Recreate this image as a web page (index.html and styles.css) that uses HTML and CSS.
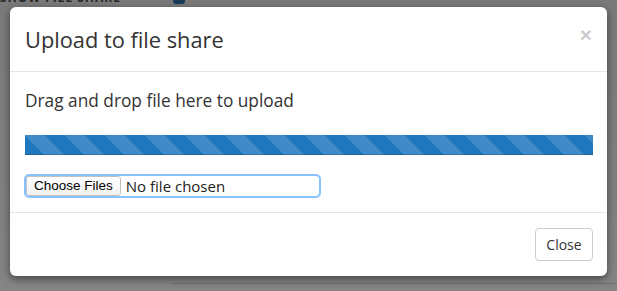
FILE: index.html
```html
<!DOCTYPE html>
<html lang="en">
<head>
  <meta charset="UTF-8">
  <title>Upload to file share</title>
  <link rel="stylesheet" href="styles.css">
</head>
<body>
  <div class="page">
    <div class="page-top">
      <span class="page-title">SHOW FILE SHARE</span>
      <span class="badge"></span>
    </div>
  </div>
  <div class="backdrop">
    <div class="modal">
      <div class="modal-header">
        <h4 class="modal-title">Upload to file share</h4>
        <a href="javascript:;" class="close">&times;</a>
      </div>
      <div class="modal-body">
        <p class="hint">Drag and drop file here to upload</p>
        <div class="progress">
          <div class="progress-bar"></div>
        </div>
        <label class="file-field">
          <span class="file-btn">Choose Files</span>
          <span class="file-name">No file chosen</span>
        </label>
      </div>
      <div class="modal-footer">
        <a href="javascript:;" class="btn">Close</a>
      </div>
    </div>
  </div>
</body>
</html>
```
FILE: styles.css
```css
body {
  margin: 0;
  width: 617px;
  height: 291px;
  overflow: hidden;
  position: relative;
  background: #fff;
  font-family: "Open Sans", "Liberation Sans", sans-serif;
  color: #333;
}
.page {
  height: 100%;
}
.page-top {
  height: 4px;
  display: flex;
  align-items: flex-end;
}
.page-title {
  font: bold 12px/12px "Open Sans", sans-serif;
  color: #555;
  margin-top: -8px;
  letter-spacing: 1px;
}
.badge {
  width: 12px;
  height: 10px;
  margin: -6px 0 0 52px;
  border-radius: 3px;
  background: #337ab7;
}
.backdrop {
  position: absolute;
  left: 0;
  top: 0;
  width: 100%;
  height: 100%;
  background:
    linear-gradient(#6e6e6e, #6e6e6e) 173px 283px / 444px 1px no-repeat,
    linear-gradient(to bottom, rgba(0,0,0,.52), rgba(0,0,0,.48));
  padding-top: 7px;
  box-sizing: border-box;
}
.modal {
  margin: 0 10px;
  background: #fff;
  border-radius: 6px;
  box-shadow: 0 3px 9px rgba(0, 0, 0, .5);
}
.modal-header {
  padding: 15px;
  height: 34px;
  border-bottom: 1px solid #e5e5e5;
  display: flex;
  justify-content: space-between;
  align-items: center;
}
.modal-title {
  margin: 0;
  font-size: 21.8px;
  font-weight: normal;
  line-height: 33px;
  color: #333;
}
.close {
  font: bold 21px/1 "Liberation Sans", Arial, sans-serif;
  color: #000;
  opacity: .2;
  text-decoration: none;
  margin-top: -10px;
}
.modal-body {
  padding: 15px 14px 16px 15px;
}
.hint {
  margin: 0 0 20px;
  font-size: 17.3px;
  line-height: 28px;
}
.progress {
  height: 20px;
  background: #f5f5f5;
  margin-bottom: 21px;
}
.progress-bar {
  height: 100%;
  background-color: #1f77bd;
  background-image: linear-gradient(45deg, rgba(255,255,255,.15) 25%, transparent 25%, transparent 50%, rgba(255,255,255,.15) 50%, rgba(255,255,255,.15) 75%, transparent 75%, transparent);
  background-size: 40px 40px;
  box-shadow: inset 0 -1px 0 rgba(0, 0, 0, .15);
}
.file-field {
  display: flex;
  align-items: center;
  width: 293px;
  height: 20px;
  margin-left: 1px;
  outline: 2px solid #8ac2ff;
  border-radius: 3px;
  box-shadow: 0 0 0 1px #b9daff;
}
.file-btn {
  height: 20px;
  box-sizing: border-box;
  padding: 0 7px;
  border: 1px solid #c2c2c2;
  border-radius: 3px;
  background: linear-gradient(#fff, #f1f1f1);
  font: 13.5px/18px "Liberation Sans", Arial, sans-serif;
  color: #000;
}
.file-name {
  margin-left: 5px;
  font-size: 15px;
  color: #222;
}
.modal-footer {
  padding: 15px 14px 15px 15px;
  border-top: 1px solid #e5e5e5;
  display: flex;
  justify-content: flex-end;
}
.btn {
  display: inline-block;
  width: 58px;
  height: 33px;
  box-sizing: border-box;
  border: 1px solid #ccc;
  border-radius: 4px;
  text-align: center;
  font-size: 14px;
  line-height: 31px;
  color: #333;
  text-decoration: none;
}
```
